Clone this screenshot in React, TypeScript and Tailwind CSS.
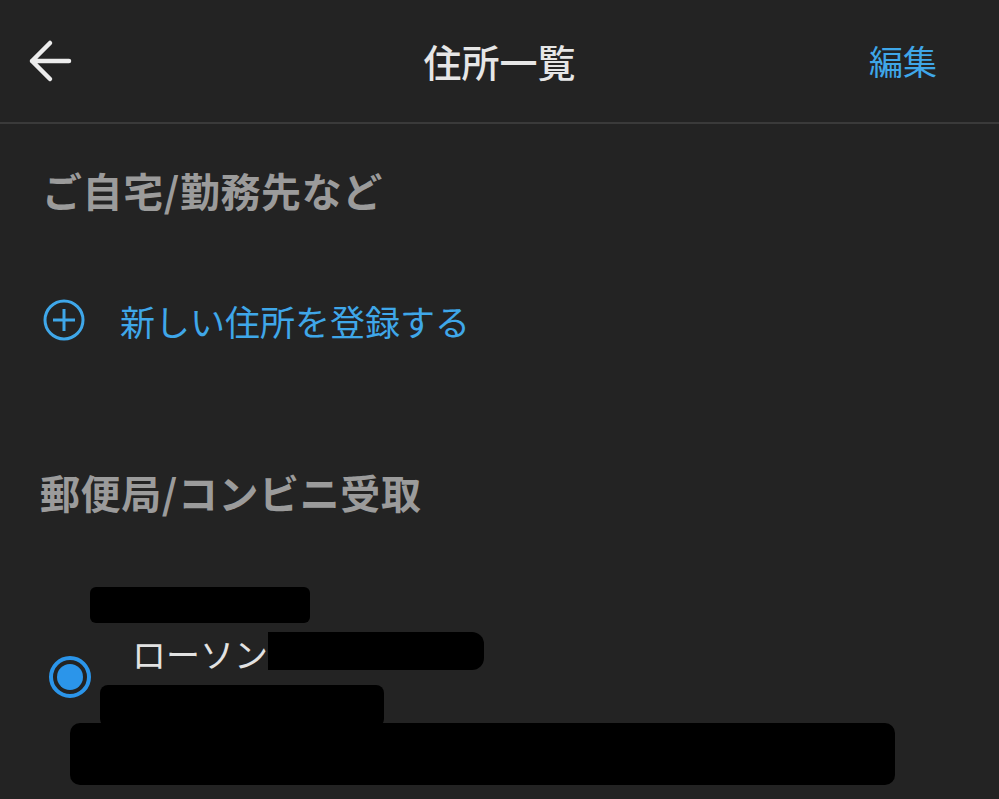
import React from "react";

const font = { fontFamily: '"Noto Sans CJK JP", "Noto Sans", sans-serif' };

// 住所一覧ヘッダー
function Header() {
  return (
    <div className="grid h-[124px] grid-cols-[1fr_auto_1fr] items-center border-b-2 border-[#3a3a3a]">
      <div className="pl-[28px]">
        <button className="flex h-[44px] w-[44px] items-center justify-center">
          <svg width="44" height="44" viewBox="0 0 44 44" fill="none">
            <path
              d="M41 22 H4 M22 4 L4 22 L22 40"
              stroke="#ececec"
              strokeWidth="4.5"
              strokeLinecap="round"
              strokeLinejoin="round"
            />
          </svg>
        </button>
      </div>
      <div className="text-[38px] font-medium leading-none text-[#e6e6e6]">住所一覧</div>
      <div className="flex justify-end pr-[62px] text-[34px] leading-none text-[#3fa7e9]">編集</div>
    </div>
  );
}

function Redact({ className }: { className: string }) {
  return <div className={"absolute bg-black " + className} />;
}

export default function App() {
  return (
    <div className="h-[799px] w-full overflow-hidden bg-[#232323]" style={font}>
      <Header />

      {/* ご自宅/勤務先など */}
      <div className="flex h-[132px] items-center pl-[42px] text-[40px] font-bold leading-none tracking-[0.6px] text-[#9b9b9b]">
        ご自宅/勤務先など
      </div>

      {/* 新しい住所を登録する */}
      <div className="flex h-[128px] items-center pl-[43px]">
        <svg width="42" height="42" viewBox="0 0 42 42" fill="none">
          <circle cx="21" cy="21" r="19" stroke="#3fa7e9" strokeWidth="3" />
          <path d="M21 10 V32 M10 21 H32" stroke="#3fa7e9" strokeWidth="3" />
        </svg>
        <span className="ml-[35px] text-[35px] leading-none text-[#3fa7e9]">
          新しい住所を登録する
        </span>
      </div>

      {/* 郵便局/コンビニ受取 */}
      <div className="h-[186px] pl-[40px] pt-[86px] text-[40px] font-bold leading-[44px] tracking-[0.6px] text-[#9b9b9b]">
        郵便局/コンビニ受取
      </div>

      {/* 受取先 */}
      <div className="relative flex h-[229px] items-start">
        <div className="ml-[49px] mt-[86px] flex h-[42px] w-[42px] items-center justify-center rounded-full border-[4px] border-[#2b95ea]">
          <div className="h-[26px] w-[26px] rounded-full bg-[#2b95ea]" />
        </div>
        <div className="ml-[41px] mt-[67px] text-[34px] leading-[34px] text-[#e2e2e2]">ローソン</div>

        <Redact className="left-[90px] top-[17px] h-[36px] w-[220px] rounded-[6px]" />
        <Redact className="left-[268px] top-[62px] h-[38px] w-[216px] rounded-r-[12px]" />
        <Redact className="left-[100px] top-[115px] h-[42px] w-[284px] rounded-[8px]" />
        <Redact className="left-[70px] top-[153px] h-[62px] w-[825px] rounded-[10px]" />
      </div>
    </div>
  );
}
